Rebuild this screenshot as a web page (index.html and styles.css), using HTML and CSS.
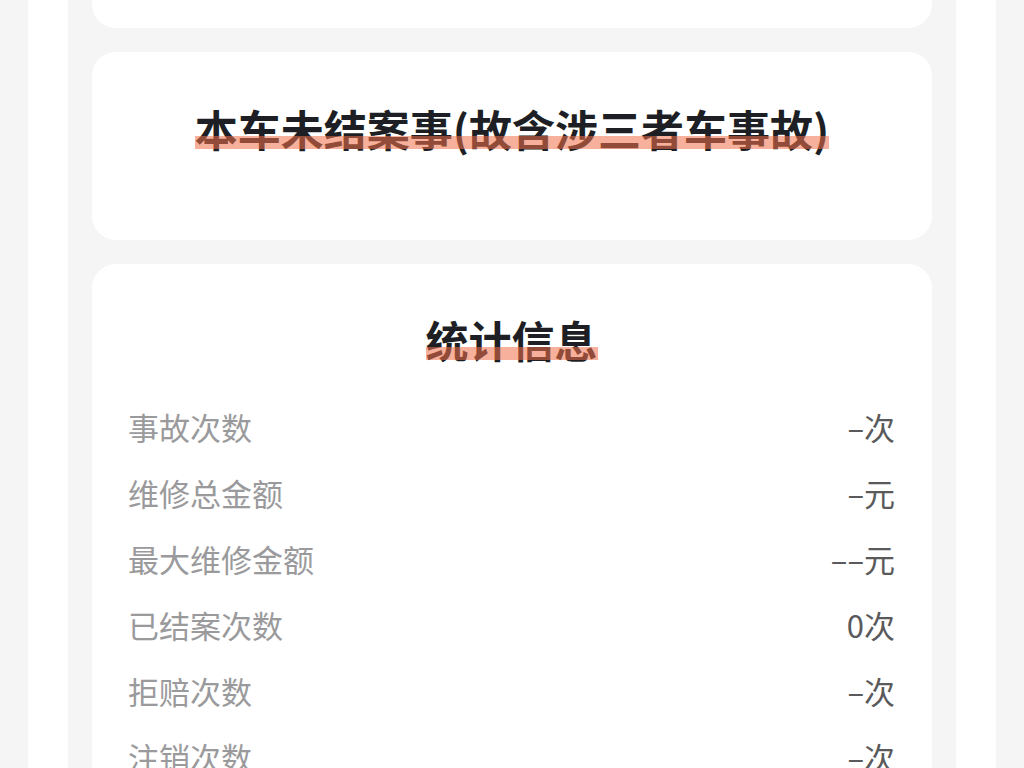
FILE: index.html
```html
<!DOCTYPE html>
<html lang="zh-CN">
<head>
  <meta charset="UTF-8">
  <meta name="viewport" content="width=device-width, initial-scale=1.0">
  <title>出险记录</title>
  <link rel="stylesheet" href="styles.css">
</head>
<body>
  <div class="frame">
    <div class="list">
      <div class="card card-top"></div>

      <div class="card card-pending">
        <h2 class="card-title"><span class="mark">本车未结案事(故含涉三者车事故)</span></h2>
      </div>

      <div class="card card-stats">
        <h2 class="card-title"><span class="mark">统计信息</span></h2>
        <ul class="stats">
          <li class="stat-row"><span class="stat-label">事故次数</span><span class="stat-value">–次</span></li>
          <li class="stat-row"><span class="stat-label">维修总金额</span><span class="stat-value">–元</span></li>
          <li class="stat-row"><span class="stat-label">最大维修金额</span><span class="stat-value">––元</span></li>
          <li class="stat-row"><span class="stat-label">已结案次数</span><span class="stat-value">0次</span></li>
          <li class="stat-row"><span class="stat-label">拒赔次数</span><span class="stat-value">–次</span></li>
          <li class="stat-row"><span class="stat-label">注销次数</span><span class="stat-value">–次</span></li>
        </ul>
      </div>
    </div>
  </div>
</body>
</html>
```

FILE: styles.css
```css
* {
  margin: 0;
  padding: 0;
  box-sizing: border-box;
}

html, body {
  height: 100%;
  overflow: hidden;
}

body {
  background-color: #f5f5f5;
  padding: 0 28px;
  font-family: "Noto Sans CJK SC", "Noto Sans", sans-serif;
}

/* 白色外框 */
.frame {
  height: 100%;
  background-color: #ffffff;
  padding: 0 40px;
}

.list {
  height: 100%;
  background-color: #f5f5f5;
  padding: 0 24px;
  display: flex;
  flex-direction: column;
  gap: 24px;
}

.card {
  background-color: #ffffff;
  border-radius: 24px;
  flex-shrink: 0;
}

/* 上一张卡片只露出底部 */
.card-top {
  height: 188px;
  margin-top: -160px;
}

.card-pending {
  height: 188px;
  padding-top: 48px;
}

.card-stats {
  padding: 47px 37px 0 36px;
}

.card-title {
  text-align: center;
  font-size: 43px;
  line-height: 56px;
  font-weight: 700;
  color: #1e1f24;
}

/* 标题下方的橙色高亮，压在文字上 */
.mark {
  position: relative;
}

.mark::after {
  content: "";
  position: absolute;
  left: 0;
  right: 0;
  top: 39px;
  height: 13px;
  background-color: rgba(240, 112, 72, 0.55);
}

.stats {
  list-style: none;
  margin-top: 26px;
}

.stat-row {
  display: flex;
  justify-content: space-between;
  align-items: center;
  height: 66px;
  font-size: 31px;
}

.stat-label {
  color: #9a9a9c;
}

.stat-value {
  color: #5a5a5c;
}
```
